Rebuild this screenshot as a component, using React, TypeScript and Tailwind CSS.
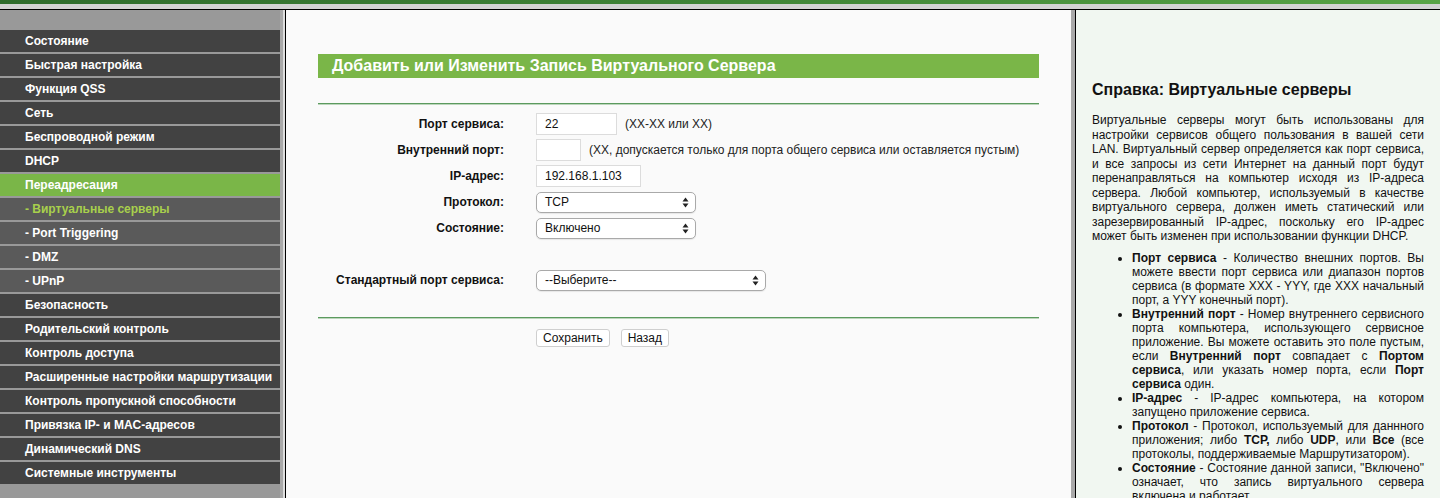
import React from "react";

const menu: { label: string; sub?: boolean; active?: boolean; current?: boolean }[] = [
  { label: "Состояние" },
  { label: "Быстрая настройка" },
  { label: "Функция QSS" },
  { label: "Сеть" },
  { label: "Беспроводной режим" },
  { label: "DHCP" },
  { label: "Переадресация", active: true },
  { label: "- Виртуальные серверы", sub: true, current: true },
  { label: "- Port Triggering", sub: true },
  { label: "- DMZ", sub: true },
  { label: "- UPnP", sub: true },
  { label: "Безопасность" },
  { label: "Родительский контроль" },
  { label: "Контроль доступа" },
  { label: "Расширенные настройки маршрутизации" },
  { label: "Контроль пропускной способности" },
  { label: "Привязка IP- и MAC-адресов" },
  { label: "Динамический DNS" },
  { label: "Системные инструменты" },
];

function Arrows() {
  return (
    <svg width="7" height="11" viewBox="0 0 7 11" className="shrink-0">
      <path d="M3.5 0.5 L6.5 4.5 H0.5 Z" fill="#222" />
      <path d="M3.5 10.5 L6.5 6.5 H0.5 Z" fill="#222" />
    </svg>
  );
}

function Select({ value, width }: { value: string; width: string }) {
  return (
    <div
      className={`${width} h-[21px] flex items-center justify-between pl-2 pr-[6px] rounded-[5px] border border-[#a9a9a9] bg-white shadow-[0_1px_1px_rgba(0,0,0,0.08)] text-[12px] text-[#111]`}
    >
      <span>{value}</span>
      <Arrows />
    </div>
  );
}

function Input({ value, width }: { value?: string; width: string }) {
  return (
    <div className={`${width} h-[22px] flex items-center pl-[8px] border border-[#dcdcdc] bg-white text-[12px] text-[#111]`}>
      {value}
    </div>
  );
}

function Row({ label, children }: { label?: string; children?: React.ReactNode }) {
  return (
    <div className="flex items-center h-[26px]">
      <div className="w-[186px] text-right text-[12px] font-bold text-[#111]">{label}</div>
      <div className="ml-[32px] flex items-center gap-2 text-[12px] text-[#222]">{children}</div>
    </div>
  );
}

function GreenLine() {
  return (
    <div className="w-[721px]">
      <div className="h-px bg-[#5b9a5e]" />
      <div className="h-px bg-[#bcd6bc]" />
    </div>
  );
}

export default function App() {
  return (
    <div className="w-[1440px] h-[498px] overflow-hidden flex flex-col font-['Liberation_Sans',Arial,sans-serif]">
      {/* Top frame */}
      <div className="h-[4px] bg-gradient-to-r from-[#2f6c2c] via-[#3f8436] to-[#58a446]" />
      <div className="h-[5px] bg-[#d3d3d3]" />
      <div className="h-px bg-black" />

      <div className="flex flex-1 min-h-0">
        {/* Sidebar */}
        <div className="w-[280px] bg-[#999999] pt-[20px] flex flex-col gap-[2px]">
          {menu.map((m) => (
            <div
              key={m.label}
              className={`h-[22px] flex items-center pl-[25px] text-[12px] font-bold whitespace-nowrap ${
                m.active ? "bg-[#7ab648] text-white" : m.sub ? "bg-[#5a5a5a]" : "bg-[#424242] text-white"
              } ${m.current ? "text-[#a8d04c]" : m.sub ? "text-white" : ""}`}
            >
              {m.label}
            </div>
          ))}
        </div>
        <div className="w-[3px] bg-[#a9a9a9]" />
        <div className="w-[2px] bg-[#dedede]" />
        <div className="w-px bg-black" />

        {/* Main form */}
        <div className="flex-1 bg-[#fafafa] pl-[32px] pt-[44px]">
          <div className="w-[721px] h-[24px] bg-[#7ab648] flex items-center pl-[14px] text-white text-[16px] font-bold">
            Добавить или Изменить Запись Виртуального Сервера
          </div>
          <div className="h-[25px]" />
          <GreenLine />
          <div className="pt-[6px]">
            <Row label="Порт сервиса:">
              <Input value="22" width="w-[81px]" />
              <span>(XX-XX или XX)</span>
            </Row>
            <Row label="Внутренний порт:">
              <Input width="w-[45px]" />
              <span>(XX, допускается только для порта общего сервиса или оставляется пустым)</span>
            </Row>
            <Row label="IP-адрес:">
              <Input value="192.168.1.103" width="w-[105px]" />
            </Row>
            <Row label="Протокол:">
              <Select value="TCP" width="w-[160px]" />
            </Row>
            <Row label="Состояние:">
              <Select value="Включено" width="w-[160px]" />
            </Row>
            <Row />
            <Row label="Стандартный порт сервиса:">
              <Select value="--Выберите--" width="w-[230px]" />
            </Row>
          </div>
          <div className="h-[24px]" />
          <GreenLine />
          <div className="flex gap-[11px] pl-[218px] pt-[10px]">
            <button className="h-[18px] px-[6px] rounded-[3px] border border-[#cfcfcf] bg-white text-[12px] text-[#111] leading-none">
              Сохранить
            </button>
            <button className="h-[18px] px-[6px] rounded-[3px] border border-[#cfcfcf] bg-white text-[12px] text-[#111] leading-none">
              Назад
            </button>
          </div>
        </div>

        <div className="w-[4px] bg-[#a9a9a9]" />
        <div className="w-[1px] bg-black" />

        {/* Help panel */}
        <div className="w-[364px] bg-[#f1f7f1] pl-[16px] pr-[16px] pt-[70px] text-[12px] leading-[14.5px] text-[#111]">
          <h2 className="text-[16px] font-bold leading-[20px] mb-[13px]">Справка: Виртуальные серверы</h2>
          <p className="text-justify">
            Виртуальные серверы могут быть использованы для настройки сервисов общего пользования в вашей сети LAN.
            Виртуальный сервер определяется как порт сервиса, и все запросы из сети Интернет на данный порт будут
            перенаправляться на компьютер исходя из IP-адреса сервера. Любой компьютер, используемый в качестве
            виртуального сервера, должен иметь статический или зарезервированный IP-адрес, поскольку его IP-адрес может
            быть изменен при использовании функции DHCP.
          </p>
          <ul className="list-disc pl-[40px] mt-[7px] text-justify leading-[14px]">
            <li>
              <b>Порт сервиса</b> - Количество внешних портов. Вы можете ввести порт сервиса или диапазон портов сервиса
              (в формате XXX - YYY, где XXX начальный порт, а YYY конечный порт).
            </li>
            <li>
              <b>Внутренний порт</b> - Номер внутреннего сервисного порта компьютера, использующего сервисное
              приложение. Вы можете оставить это поле пустым, если <b>Внутренний порт</b> совпадает с{" "}
              <b>Портом сервиса</b>, или указать номер порта, если <b>Порт сервиса</b> один.
            </li>
            <li>
              <b>IP-адрес</b> - IP-адрес компьютера, на котором запущено приложение сервиса.
            </li>
            <li>
              <b>Протокол</b> - Протокол, используемый для даннного приложения; либо <b>TCP,</b> либо <b>UDP</b>, или{" "}
              <b>Все</b> (все протоколы, поддерживаемые Маршрутизатором).
            </li>
            <li>
              <b>Состояние</b> - Состояние данной записи, "Включено" означает, что запись виртуального сервера включена
              и работает.
            </li>
          </ul>
        </div>
      </div>
    </div>
  );
}
